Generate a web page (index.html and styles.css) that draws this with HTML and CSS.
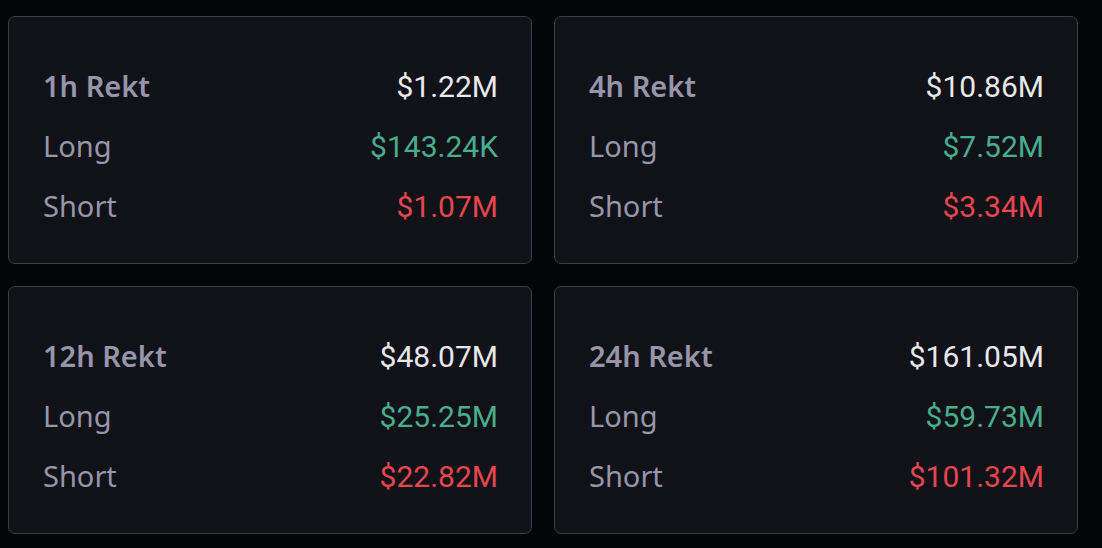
FILE: index.html
```html
<!DOCTYPE html>
<html lang="en">
<head>
<meta charset="utf-8">
<title>Rekt</title>
<link rel="stylesheet" href="styles.css">
</head>
<body>
<div class="grid">
  <div class="card">
    <div class="row"><span class="label head">1h Rekt</span><span class="value total">$1.22M</span></div>
    <div class="row"><span class="label">Long</span><span class="value long">$143.24K</span></div>
    <div class="row"><span class="label">Short</span><span class="value short">$1.07M</span></div>
  </div>
  <div class="card">
    <div class="row"><span class="label head">4h Rekt</span><span class="value total">$10.86M</span></div>
    <div class="row"><span class="label">Long</span><span class="value long">$7.52M</span></div>
    <div class="row"><span class="label">Short</span><span class="value short">$3.34M</span></div>
  </div>
  <div class="card">
    <div class="row"><span class="label head">12h Rekt</span><span class="value total">$48.07M</span></div>
    <div class="row"><span class="label">Long</span><span class="value long">$25.25M</span></div>
    <div class="row"><span class="label">Short</span><span class="value short">$22.82M</span></div>
  </div>
  <div class="card">
    <div class="row"><span class="label head">24h Rekt</span><span class="value total">$161.05M</span></div>
    <div class="row"><span class="label">Long</span><span class="value long">$59.73M</span></div>
    <div class="row"><span class="label">Short</span><span class="value short">$101.32M</span></div>
  </div>
</div>
</body>
</html>
```
FILE: styles.css
```css
html, body {
  background: #030407;
}
body {
  margin: 0;
  padding: 16px 8px;
}
.grid {
  display: grid;
  grid-template-columns: 524px 524px;
  column-gap: 22px;
  row-gap: 22px;
}
.card {
  box-sizing: border-box;
  height: 248px;
  background: #111217;
  border: 1px solid #3b3e44;
  border-radius: 7px;
  padding: 39px 33px 0 34px;
}
.row {
  display: flex;
  justify-content: space-between;
  align-items: baseline;
  height: 60px;
  line-height: 60px;
}
.label {
  font-family: "Noto Sans", sans-serif;
  font-size: 29px;
  color: #9695aa;
}
.label.head {
  font-weight: 600;
}
.value {
  font-family: Roboto, sans-serif;
  font-size: 30px;
}
.total { color: #e8e8ec; }
.long { color: #48ad8c; }
.short { color: #e6474f; }
```
